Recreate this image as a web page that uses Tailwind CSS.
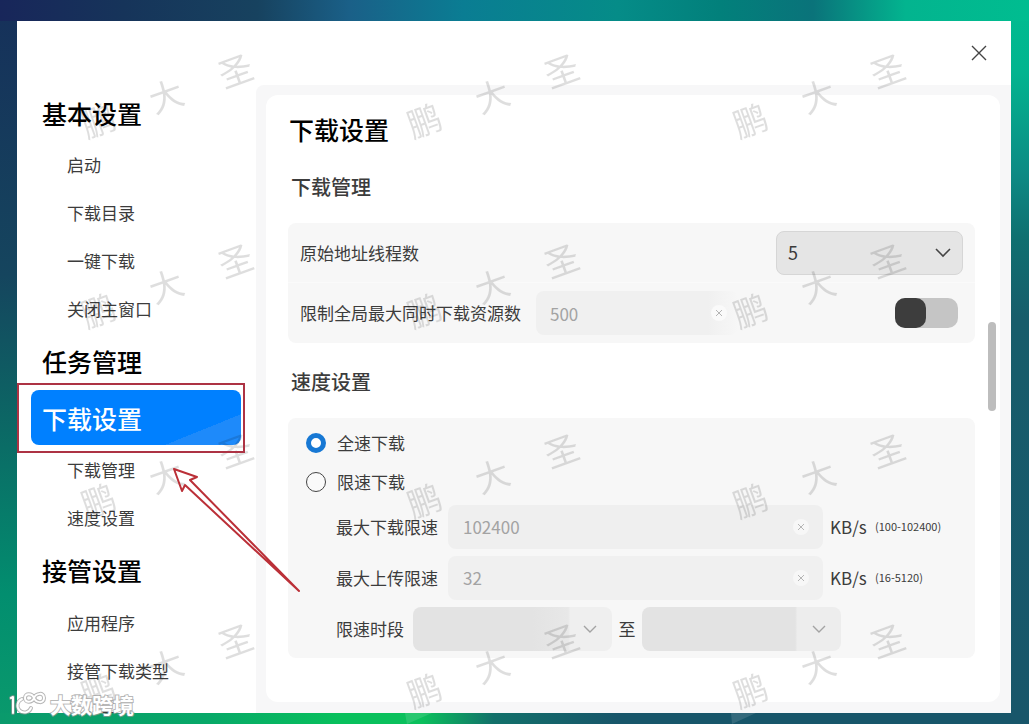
<!DOCTYPE html>
<html lang="zh-CN">
<head>
<meta charset="utf-8">
<meta name="viewport" content="width=device-width, initial-scale=1">
<title>下载设置</title>
<script src="https://cdn.jsdelivr.net/npm/@tailwindcss/browser@4"></script>
</head>
<body class="relative h-screen overflow-hidden pt-[21px] pr-[18px] pb-[11px] pl-[17px] font-['Noto_Sans_CJK_SC',sans-serif] text-[17px] text-[#3c3c3c] [background:linear-gradient(90deg,#18265a,#16345a_12%,#17425f_25%,#1a6088_34%,#0a7d93_45%,#058c88_60%,#02807b_70%,#0a737a_79%,#03b48f_88%,#00bd90)_top/100%_21px_no-repeat,linear-gradient(90deg,#0a9a6c,#07a868_20%,#08c05c_33%,#0bc05c_41%,#12706a_48%,#18566a_60%,#18566a)_bottom/100%_11px_no-repeat,linear-gradient(180deg,#16305a,#15455e_38%,#0a6d66_62%,#028e6f_82%,#0a9a6c)_left/17px_100%_no-repeat,linear-gradient(180deg,#00bd90,#02b48f_10%,#0d8a84_24%,#0f6f70_33%,#175d6b_44%,#18566a)_right/18px_100%_no-repeat]">
  <main class="flex h-full flex-col overflow-hidden bg-white">
    <header class="flex h-16 shrink-0 items-center justify-end pr-6">
      <button type="button" aria-label="关闭" class="block">
        <svg class="h-4 w-4" viewBox="0 0 16 16" fill="none" stroke="#444" stroke-width="1.4"><path d="M1 1l14 14M15 1L1 15"/></svg>
      </button>
    </header>
    <div class="flex min-h-0 flex-1">
      <nav class="w-[239px] shrink-0 overflow-hidden">
        <a href="#basic" class="flex h-14 items-center pt-px pl-[25px] text-[25px] font-medium text-black">基本设置</a>
        <a href="#start" class="flex h-12 items-center pl-[50px]">启动</a>
        <a href="#dir" class="flex h-12 items-center pl-[50px]">下载目录</a>
        <a href="#onekey" class="flex h-12 items-center pl-[50px]">一键下载</a>
        <a href="#close" class="flex h-12 items-center pl-[50px]">关闭主窗口</a>
        <a href="#task" class="flex h-[57px] items-center pl-[25px] text-[25px] font-medium text-black">任务管理</a>
        <a href="#download" aria-current="page" class="mr-[15px] mb-px ml-[14px] flex h-[55px] items-center rounded-lg pt-[3px] pl-[11px] text-[25px] font-medium text-white [background:linear-gradient(158deg,transparent_78%,#1e8afa_78%)_#0080ff]">下载设置</a>
        <a href="#manage" class="flex h-12 items-center pl-[50px]">下载管理</a>
        <a href="#speed" class="flex h-12 items-center pl-[50px]">速度设置</a>
        <a href="#takeover" class="flex h-[57px] items-center pl-[25px] text-[25px] font-medium text-black">接管设置</a>
        <a href="#apps" class="flex h-12 items-center pl-[50px]">应用程序</a>
        <a href="#types" class="flex h-12 items-center pl-[50px]">接管下载类型</a>
        <a href="#sites" class="flex h-12 items-center pl-[50px]">下载网站</a>
      </nav>
      <div class="min-w-0 flex-1 rounded-tl-lg bg-[#f7f7f8] pt-[10px] pr-[11px] pb-[11px] pl-[10px]">
        <section id="download" class="relative h-full rounded-xl bg-white pt-[17px] pr-[25px] pl-[22px]">
          <h1 class="flex h-9 items-center pl-px text-[25px] font-medium text-black">下载设置</h1>
          <h2 id="manage" class="flex h-[75px] items-center pt-[2px] pl-[3px] text-[20px] font-medium">下载管理</h2>
          <div class="rounded-lg bg-[#f7f7f7]">
            <div class="flex h-[60px] items-center justify-between border-b border-[#fafafa] pr-3 pl-3">
              <label for="threads">原始地址线程数</label>
              <div class="relative">
                <select id="threads" class="block h-[44px] w-[187px] appearance-none rounded-lg border border-[#d6d6d6] bg-[#e5e5e5] pl-[11px] text-[18px] text-[#3a3a3a]"><option>5</option></select>
                <svg class="pointer-events-none absolute top-4 right-3 h-3 w-4" viewBox="0 0 16 12" fill="none" stroke="#444" stroke-width="1.6"><path d="M1 2l7 7 7-7"/></svg>
              </div>
            </div>
            <div class="flex h-[60px] items-center pr-[17px] pl-3">
              <label for="limit" class="w-[236px] shrink-0">限制全局最大同时下载资源数</label>
              <div class="relative w-[202px]">
                <input id="limit" type="text" value="500" disabled class="block h-[44px] w-full rounded-lg bg-[linear-gradient(90deg,#f0f0f0_85%,#f7f7f7)] pl-[14px] text-[17px] text-[#a3a3a3]">
                <svg class="pointer-events-none absolute top-[14px] right-[11px] h-4 w-4" viewBox="0 0 16 16"><circle cx="8" cy="8" r="8" fill="#fafafa"/><path d="M5 5l6 6M11 5l-6 6" stroke="#b5b5b5"/></svg>
              </div>
              <input type="checkbox" aria-label="限制全局最大同时下载资源数" class="ml-auto h-[30px] w-[63px] appearance-none rounded-[10px] bg-[#c5c5c5] before:block before:h-full before:w-[31px] before:rounded-[10px] before:bg-[#3d3d3d] before:content-['']">
            </div>
          </div>
          <h2 id="speed" class="flex h-[75px] items-center pt-[3px] pl-[3px] text-[20px] font-medium">速度设置</h2>
          <div class="rounded-lg bg-[#f7f7f7] pt-[5px] pb-1 pl-[18px]">
            <label class="flex h-[39px] items-center gap-[11px]"><input type="radio" name="mode" checked class="h-5 w-5 appearance-none rounded-full border-[#6b6b6b] bg-white checked:border-[5px] checked:border-[#1778d4]">全速下载</label>
            <label class="flex h-[39px] items-center gap-[11px]"><input type="radio" name="mode" class="h-5 w-5 appearance-none rounded-full border border-[#444] bg-[#fafafa]">限速下载</label>
            <div class="flex h-[51px] items-center pl-[30px]">
              <label for="down" class="w-[112px] shrink-0">最大下载限速</label>
              <div class="relative w-[375px]">
                <input id="down" type="text" value="102400" disabled class="block h-[44px] w-full rounded-lg bg-[#efefef] pl-[15px] text-[17px] text-[#a3a3a3]">
                <svg class="pointer-events-none absolute top-[14px] right-[14px] h-4 w-4" viewBox="0 0 16 16"><circle cx="8" cy="8" r="8" fill="#f7f7f7"/><path d="M5 5l6 6M11 5l-6 6" stroke="#b5b5b5"/></svg>
              </div>
              <span class="ml-[7px] w-[45px]">KB/s</span><span class="text-[11px]">(100-102400)</span>
            </div>
            <div class="flex h-[51px] items-center pl-[30px]">
              <label for="up" class="w-[112px] shrink-0">最大上传限速</label>
              <div class="relative w-[375px]">
                <input id="up" type="text" value="32" disabled class="block h-[44px] w-full rounded-lg bg-[#f0f0f0] pl-[15px] text-[17px] text-[#a3a3a3]">
                <svg class="pointer-events-none absolute top-[14px] right-[14px] h-4 w-4" viewBox="0 0 16 16"><circle cx="8" cy="8" r="8" fill="#f7f7f7"/><path d="M5 5l6 6M11 5l-6 6" stroke="#b5b5b5"/></svg>
              </div>
              <span class="ml-[7px] w-[45px]">KB/s</span><span class="text-[11px]">(16-5120)</span>
            </div>
            <div class="flex h-[51px] items-center pl-[30px]">
              <label for="from" class="w-[77px] shrink-0">限速时段</label>
              <div class="relative">
                <select id="from" disabled class="block h-[44px] w-[199px] appearance-none rounded-lg bg-[linear-gradient(90deg,#e3e3e3_60%,#e8e8e8_78%,#efefef_79%)]"><option></option></select>
                <svg class="pointer-events-none absolute top-4 right-[14px] h-3 w-4" viewBox="0 0 16 12" fill="none" stroke="#a3a3a3" stroke-width="1.4"><path d="M2 3l6 6 6-6"/></svg>
              </div>
              <label for="to" class="w-[30px] text-center">至</label>
              <div class="relative">
                <select id="to" disabled class="block h-[44px] w-[199px] appearance-none rounded-lg bg-[linear-gradient(90deg,#e3e3e3_77%,#ededed_78%)]"><option></option></select>
                <svg class="pointer-events-none absolute top-4 right-[14px] h-3 w-4" viewBox="0 0 16 12" fill="none" stroke="#a3a3a3" stroke-width="1.4"><path d="M2 3l6 6 6-6"/></svg>
              </div>
            </div>
          </div>
          <div class="absolute top-[227px] right-1 h-[89px] w-2 rounded-full bg-[#bdbdbd]"></div>
        </section>
      </div>
    </div>
  </main>

  <!-- watermark, annotation and site mark over the dialog -->
  <svg aria-hidden="true" class="pointer-events-none absolute top-0 left-0 h-[724px] w-[1029px]" viewBox="0 0 1029 724">
    <defs>
      <pattern id="mark" x="64" y="40" width="326" height="190" patternUnits="userSpaceOnUse">
        <g fill="#000" fill-opacity=".13" font-size="34" text-anchor="middle" transform="translate(102 56) rotate(-20)">
          <text x="-72" y="13">鹏</text><text x="0" y="13">大</text><text x="74" y="13">圣</text>
        </g>
      </pattern>
    </defs>
    <rect x="17" y="21" width="994" height="692" fill="url(#mark)"/>
    <path d="M405 713h27l-25 11zM731 713h25l-24 11z" fill="#fff" fill-opacity=".12"/>
    <rect x="18" y="384" width="226" height="68" fill="none" stroke="#ad3344" stroke-width="2"/>
    <path d="M174 469L197 477L190 480L299 591L185 485L182 491Z" fill="none" stroke="#bb3038" stroke-width="2" stroke-linejoin="round"/>
    <g fill="none" stroke-linecap="round" stroke-linejoin="round">
      <path d="M11 698l2-1v16M31 708a7 7 0 1 1-9-9M34 698c-2-5-9-5-9 0s7 5 9 0s10-6 10 0s-8 5-10 0" stroke="#999" stroke-width="4" stroke-opacity=".7"/>
      <path d="M11 698l2-1v16M31 708a7 7 0 1 1-9-9M34 698c-2-5-9-5-9 0s7 5 9 0s10-6 10 0s-8 5-10 0" stroke="#fff" stroke-width="2"/>
    </g>
    <text x="50" y="713" font-size="21" font-weight="700" fill="#fff" stroke="#999" stroke-opacity=".7" stroke-width="2" paint-order="stroke">大数跨境</text>
  </svg>
</body>
</html>
